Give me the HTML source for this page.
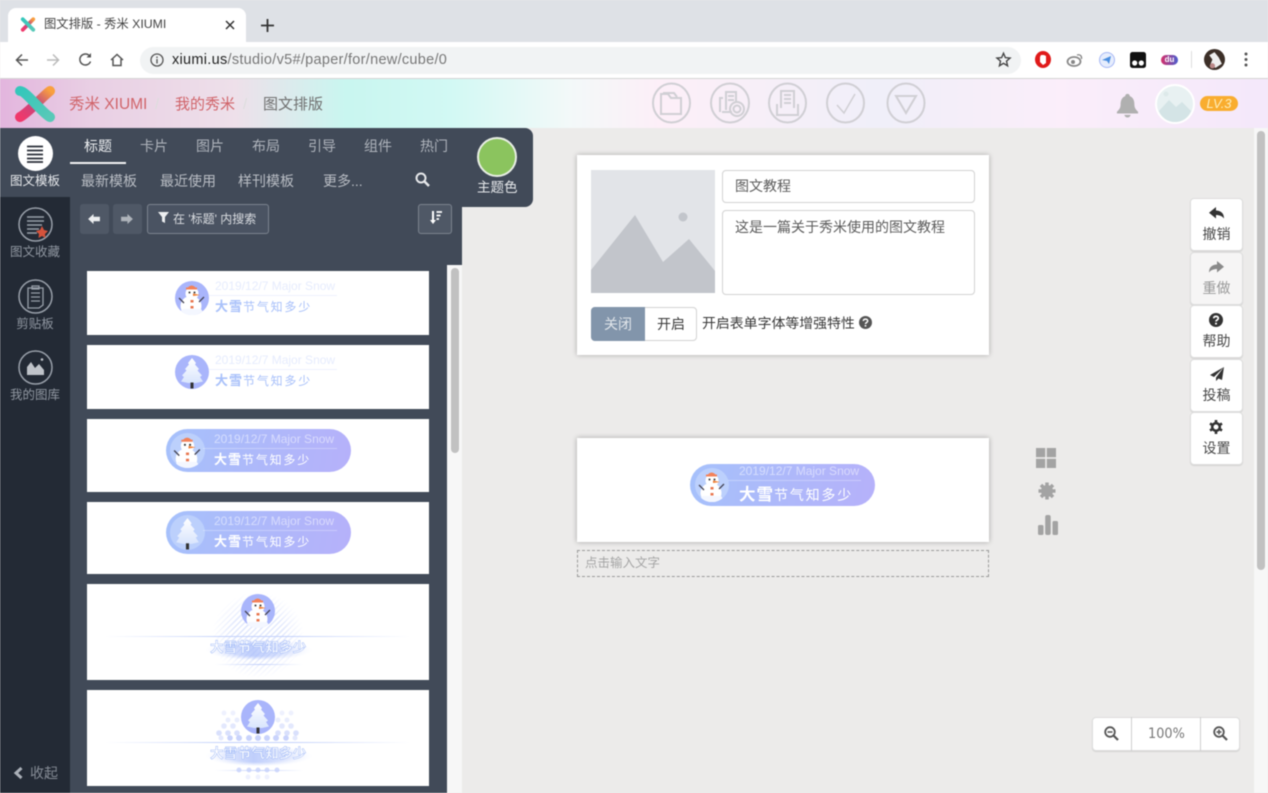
<!DOCTYPE html>
<html lang="zh"><head><meta charset="utf-8"><title>图文排版 - 秀米 XIUMI</title>
<style>
*{box-sizing:border-box}
html{background:#ecebea}
html,body{margin:0;padding:0;width:1268px;height:793px;overflow:hidden;font-family:"Liberation Sans","Noto Sans CJK SC",sans-serif}
#root{position:absolute;left:0;top:0;width:1268px;height:793px;overflow:hidden;background:#ecebea;filter:blur(.4px)}
.a{position:absolute}
.t{position:absolute;white-space:nowrap;line-height:1}
svg{position:absolute;overflow:visible}
.card{position:absolute;left:87px;width:342px;background:#fff}
.btn{position:absolute;left:1190px;width:53px;height:53px;background:#fff;border:1px solid #ddd;border-radius:4px;box-shadow:0 1px 1px rgba(0,0,0,.1)}
.btn span{position:absolute;left:0;right:0;top:27px;text-align:center;font-size:14px;line-height:16px;color:#4a4a4a}
.pill{position:absolute;width:185px;height:43px;border-radius:22px;background:linear-gradient(100deg,#a6c1fb,#b6b1fa)}
.pill .d{position:absolute;left:48px;top:3px;font-size:12px;line-height:14px;color:rgba(255,255,255,.5);white-space:nowrap}
.pill .l{position:absolute;left:37px;right:14px;top:19px;height:1px;background:rgba(255,255,255,.3)}
.pill .m{position:absolute;left:48px;top:22px;font-size:12px;line-height:17px;color:#fff;white-space:nowrap;letter-spacing:1.800px}
.pill b{font-size:13px;font-weight:700;letter-spacing:1px}
.side{position:absolute;left:0;width:70px;text-align:center;font-size:12.500px;line-height:14px;color:#8f96a0}
.tab{position:absolute;top:138px;font-size:14px;line-height:16px;color:#aeb3bb}
.sub{position:absolute;top:173px;font-size:14px;line-height:17px;color:#b9bdc4;white-space:nowrap}
</style></head><body><div id="root">
<svg width="0" height="0" style="position:absolute"><defs>
<linearGradient id="tg" x1="0" y1="0" x2="0" y2="1"><stop offset="0" stop-color="#fff"/><stop offset="1" stop-color="#d9e5fd"/></linearGradient>
<clipPath id="cc"><circle cx="17" cy="17" r="17"/></clipPath>
<symbol id="snow" viewBox="0 0 34 34">
<circle cx="17" cy="17" r="17" fill="currentColor"/>
<g clip-path="url(#cc)"><circle cx="17" cy="12.500" r="6.500" fill="#fff"/><ellipse cx="16" cy="25" rx="10.500" ry="10" fill="#fff"/><path d="M0 34L8 28H26L30 34Z" fill="#f4f7ff"/></g>
<path d="M12 7.500Q16.500 1.500 21.500 7.500Z" fill="#f3825a"/><rect x="11" y="6.500" width="11" height="2" fill="#f3825a"/>
<path d="M18 12.500L25 14L18 15Z" fill="#ef7b30"/><circle cx="14.500" cy="11.500" r="1" fill="#333"/><circle cx="19.500" cy="11.500" r="1" fill="#333"/>
<path d="M4 17L9 22M29 16L24 21" stroke="#445" stroke-width="1.300"/>
<rect x="15.500" y="19" width="3" height="2.500" fill="#e9774f"/><rect x="15.500" y="25" width="3" height="2.500" fill="#e9774f"/>
</symbol>
<symbol id="tree" viewBox="0 0 34 34">
<circle cx="17" cy="17" r="17" fill="currentColor"/>
<path d="M17 3L21 8L20 9.500L24 14L22.500 15.500L27 20.500L25 22L28 26.500L21 28H13L6 26.500L9 22L7 20.500L11.500 15.500L10 14L14 9.500L13 8Z" fill="url(#tg)"/>
<rect x="15.500" y="27.500" width="3" height="6" fill="#333"/>
</symbol>
<linearGradient id="lg1" x1="0" y1="1" x2="1" y2="0"><stop offset="0" stop-color="#f0386b"/><stop offset=".55" stop-color="#c2477f"/><stop offset="1" stop-color="#f9a03f"/></linearGradient>
<linearGradient id="lg2" x1="0" y1="0" x2="1" y2="1"><stop offset="0" stop-color="#35c7bb"/><stop offset="1" stop-color="#58c9b8"/></linearGradient>
</defs></svg>

<!-- browser chrome -->
<div class="a" style="left:0;top:0;width:1268px;height:42px;background:#dee1e6"></div>
<div class="a" style="left:8px;top:8px;width:238px;height:34px;background:#fff;border-radius:8px 8px 0 0"></div>
<svg style="left:20px;top:17px" width="16" height="15" viewBox="0 0 40 40"><path d="M6 34L34 6" stroke="url(#lg1)" stroke-width="10" stroke-linecap="round"/><path d="M6 6L34 34" stroke="url(#lg2)" stroke-width="10" stroke-linecap="round"/></svg>
<div class="t" style="left:44px;top:18px;font-size:12.300px;color:#444">图文排版 - 秀米 XIUMI</div>
<svg style="left:225px;top:20px" width="10" height="10" viewBox="0 0 10 10"><path d="M1 1L9 9M9 1L1 9" stroke="#333" stroke-width="1.500"/></svg>
<svg style="left:261px;top:19px" width="13" height="13" viewBox="0 0 13 13"><path d="M6.500 0V13M0 6.500H13" stroke="#333" stroke-width="1.800"/></svg>
<div class="a" style="left:0;top:42px;width:1268px;height:36px;background:#fff"></div>
<div class="a" style="left:0;top:78px;width:1268px;height:1px;background:#d4d4d4"></div>
<svg style="left:15px;top:53px" width="14" height="14" viewBox="0 0 14 14"><path d="M13 7H1.500M7 1.500L1.500 7L7 12.500" fill="none" stroke="#555" stroke-width="1.500"/></svg>
<svg style="left:46px;top:53px" width="14" height="14" viewBox="0 0 14 14"><path d="M1 7H12.500M7 1.500L12.500 7L7 12.500" fill="none" stroke="#bbb" stroke-width="1.500"/></svg>
<svg style="left:78px;top:52px" width="15" height="15" viewBox="0 0 15 15"><path d="M12.500 9.500A5.500 5.500 0 1 1 12 4.500" fill="none" stroke="#555" stroke-width="1.500"/><path d="M13 1V5.500H8.500Z" fill="#555"/></svg>
<svg style="left:110px;top:53px" width="14" height="14" viewBox="0 0 14 14"><path d="M1 7L7 1.500L13 7M3 6V12.500H11V6" fill="none" stroke="#555" stroke-width="1.500"/></svg>
<div class="a" style="left:140px;top:47px;width:881px;height:27px;background:#f1f3f4;border-radius:13.500px"></div>
<svg style="left:150px;top:53px" width="14" height="14" viewBox="0 0 14 14"><circle cx="7" cy="7" r="6" fill="none" stroke="#555" stroke-width="1.300"/><path d="M7 6V10.500M7 3.500V5" stroke="#555" stroke-width="1.400"/></svg>
<div class="t" style="left:172px;top:52px;font-size:14.500px;letter-spacing:.29px;color:#777;line-height:16px"><span style="color:#222">xiumi.us</span>/studio/v5#/paper/for/new/cube/0</div>
<svg style="left:996px;top:52px" width="15" height="15" viewBox="0 0 24 24"><path d="M12 2L15 9L22.500 9.700L16.800 14.600L18.500 22L12 18L5.500 22L7.200 14.600L1.500 9.700L9 9Z" fill="none" stroke="#444" stroke-width="2.200"/></svg>
<svg style="left:1035px;top:51px" width="16" height="17" viewBox="0 0 16 17"><ellipse cx="8" cy="8.500" rx="8" ry="8.500" fill="#e01a1a"/><path d="M5 6V11L8 14L11 12V5L9 4H6Z" fill="#fff"/></svg>
<svg style="left:1067px;top:52px" width="16" height="15" viewBox="0 0 16 15"><ellipse cx="7" cy="9.500" rx="6.500" ry="4.500" fill="none" stroke="#8a8a8a" stroke-width="1.800"/><circle cx="6" cy="10" r="2" fill="#888"/><path d="M10 3C13 2 15 4 14.500 7" fill="none" stroke="#888" stroke-width="1.300"/></svg>
<svg style="left:1099px;top:52px" width="16" height="16" viewBox="0 0 16 16"><circle cx="8" cy="8" r="7.500" fill="#e6edfd" stroke="#a7b8f5"/><path d="M3 8L12 4L10 12L8 9Z" fill="#4a8ee0"/></svg>
<svg style="left:1130px;top:52px" width="16" height="16" viewBox="0 0 16 16"><rect width="16" height="16" rx="2.500" fill="#111"/><circle cx="4.700" cy="11" r="2.600" fill="#fff"/><circle cx="11.300" cy="11" r="2.600" fill="#fff"/></svg>
<div class="a" style="left:1161px;top:55px;width:17px;height:10px;border-radius:5px;background:linear-gradient(90deg,#d6306c,#4a5ecf);color:#fff;font-size:8px;line-height:10px;text-align:center;font-weight:700">du</div>
<div class="a" style="left:1191px;top:51px;width:1px;height:17px;background:#ddd"></div>
<svg style="left:1204px;top:49px" width="21" height="21" viewBox="0 0 20 20"><circle cx="10" cy="10" r="10" fill="#3c2f28"/><path d="M5 6L10 3L14 8L17 14L11 18L6 15L8 10Z" fill="#eee"/><circle cx="8" cy="16" r="2.500" fill="#b88"/></svg>
<svg style="left:1244px;top:52px" width="4" height="15" viewBox="0 0 4 15"><circle cx="2" cy="2" r="1.500" fill="#555"/><circle cx="2" cy="7.500" r="1.500" fill="#555"/><circle cx="2" cy="13" r="1.500" fill="#555"/></svg>

<!-- header -->
<div class="a" style="left:0;top:79px;width:1268px;height:49px;background:linear-gradient(90deg,#e3b5de 0,#e9cfe4 90px,#eee0ea 235px,#c9f6f0 345px,#d2f9f4 450px,#f3f9f9 570px,#fdeff8 660px,#f0eff9 880px,#fbeefa 1060px,#f4e8fa 1268px)"></div>
<svg style="left:14px;top:85px" width="42" height="38" viewBox="0 0 42 38"><path d="M6 32C14 28 28 12 36 6" stroke="url(#lg1)" stroke-width="10" stroke-linecap="round" fill="none"/><path d="M6 6C12 6 28 28 36 32" stroke="url(#lg2)" stroke-width="10" stroke-linecap="round" fill="none"/></svg>
<div class="t" style="left:69px;top:96px;font-size:15.500px;line-height:18px;color:#d0646a">秀米 XIUMI</div>
<div class="t" style="left:155px;top:96px;font-size:15px;line-height:18px;color:#ddd">/</div>
<div class="t" style="left:175px;top:96px;font-size:15px;line-height:18px;color:#d0646a">我的秀米</div>
<div class="t" style="left:243px;top:96px;font-size:15px;line-height:18px;color:#ddd">/</div>
<div class="t" style="left:263px;top:96px;font-size:15px;line-height:18px;color:#6f6f6f">图文排版</div>
<svg style="left:650px;top:82px" width="280" height="42" viewBox="0 0 280 42" fill="none" stroke="#d0cfd4" stroke-width="2">
<ellipse cx="21.500" cy="21" rx="18.500" ry="19.500"/><ellipse cx="80" cy="21" rx="19" ry="19.500"/><ellipse cx="137.500" cy="21" rx="18.500" ry="19.500"/><ellipse cx="195.500" cy="21" rx="18.500" ry="19.500"/><ellipse cx="256" cy="21" rx="18.500" ry="19.500"/>
<path d="M11 14V32H31V16H21L18 12H11Z"/><path d="M14 12V11H24L27 15"/>
<path d="M70 30V16H73M76 28V10H86V20M72 30H82M78 14H84M78 18H84"/><circle cx="87" cy="27" r="7"/><circle cx="87" cy="27" r="3.500"/>
<path d="M127 22V33H148V22M131 26V9H144V26M134 13H141M134 17H141M134 21H141"/>
<path d="M187 23L194 31L205 12" stroke-width="1.500"/>
<path d="M246 14H266L256 31Z"/>
</svg>
<svg style="left:1116px;top:93px" width="23" height="25" viewBox="0 0 25 28" preserveAspectRatio="none"><path d="M12.500 1C14 1 15 2 15 3.500C19 5 20 9 20 13C20 17 22 19 24 21V23H1V21C3 19 5 17 5 13C5 9 6 5 10 3.500C10 2 11 1 12.500 1Z" fill="#b0b0b0"/><path d="M9 24.500H16C15.500 26.500 14 27.500 12.500 27.500C11 27.500 9.500 26.500 9 24.500Z" fill="#b0b0b0"/></svg>
<svg style="left:1155px;top:84px" width="40" height="40" viewBox="0 0 40 40"><circle cx="20" cy="20" r="19" fill="#e8f1f2" stroke="#fff" stroke-width="2"/><path d="M4 27L14 16L21 23L27 18L36 27C32 36 25 38 20 38C13 38 7 34 4 27Z" fill="#d4e4e6"/><circle cx="11" cy="10" r="2.500" fill="#dde9ea"/></svg>
<div class="a" style="left:1200px;top:96px;width:38px;height:15px;border-radius:7.500px;background:#f9ad2f;color:#fdeebc;font-size:13px;line-height:15px;font-style:italic;text-align:center">LV.3</div>

<!-- left panels -->
<div class="a" style="left:0;top:197px;width:70px;height:596px;background:#232a35"></div>
<div class="a" style="left:70px;top:200px;width:392px;height:593px;background:#414a58"></div>
<div class="a" style="left:0;top:128px;width:533px;height:79px;background:#414a58;border-radius:0 8px 8px 0"></div>
<div class="a" style="left:0;top:197px;width:70px;height:10px;background:#232a35"></div>
<div class="a" style="left:447px;top:265px;width:15px;height:528px;background:#f7f7f7"></div>
<div class="a" style="left:451px;top:268px;width:8px;height:185px;background:#c1c1c1;border-radius:4px"></div>

<div class="a" style="left:18px;top:136px;width:35px;height:35px;border-radius:50%;background:#fff"></div>
<svg style="left:26px;top:145px" width="18" height="18" viewBox="0 0 18 18"><path d="M1 1.500H17M1 5.500H17M1 9.500H17M1 13.500H17M1 17H17" stroke="#2a2f38" stroke-width="1.800"/></svg>
<div class="side" style="top:174px;color:#e6e8eb">图文模板</div>
<svg style="left:18px;top:207px" width="35" height="35" viewBox="0 0 35 35"><circle cx="17.500" cy="17.500" r="16.500" fill="none" stroke="#99a0aa" stroke-width="1.500"/><path d="M9 10H26M9 14H26M9 18H24M9 22H21M9 26H19" stroke="#99a0aa" stroke-width="1.600"/><path d="M24 19L26 23L30 24L27 27L27.500 31L24 29L20.500 31L21 27L18 24L22 23Z" fill="#d5533c"/></svg>
<div class="side" style="top:245px">图文收藏</div>
<svg style="left:18px;top:279px" width="35" height="35" viewBox="0 0 35 35"><circle cx="17.500" cy="17.500" r="16.500" fill="none" stroke="#99a0aa" stroke-width="1.500"/><path d="M10 9H25V26L21 29H10Z M14 7H21V10H14Z M13 14H22M13 18H22M13 22H22" fill="none" stroke="#99a0aa" stroke-width="1.300"/></svg>
<div class="side" style="top:317px">剪贴板</div>
<svg style="left:18px;top:350px" width="35" height="35" viewBox="0 0 35 35"><circle cx="17.500" cy="17.500" r="16.500" fill="none" stroke="#99a0aa" stroke-width="1.500"/><path d="M9 25V17L13 12L17 18L21 14L26 20V25Z" fill="#bfc3c9"/><circle cx="24" cy="9.500" r="1.300" fill="#bfc3c9"/></svg>
<div class="side" style="top:388px">我的图库</div>
<svg style="left:13px;top:767px" width="11" height="12" viewBox="0 0 11 12"><path d="M8.500 1L3 6L8.500 11" fill="none" stroke="#aab0b8" stroke-width="3"/></svg>
<div class="t" style="left:30px;top:765px;font-size:14px;line-height:16px;color:#858b95">收起</div>

<div class="tab" style="left:84px;color:#eceef0">标题</div>
<div class="a" style="left:70px;top:162px;width:56px;height:2px;background:#f3f4f5"></div>
<div class="tab" style="left:140px">卡片</div>
<div class="tab" style="left:196px">图片</div>
<div class="tab" style="left:252px">布局</div>
<div class="tab" style="left:308px">引导</div>
<div class="tab" style="left:364px">组件</div>
<div class="tab" style="left:420px">热门</div>
<div class="sub" style="left:81px">最新模板</div>
<div class="sub" style="left:160px">最近使用</div>
<div class="sub" style="left:238px">样刊模板</div>
<div class="sub" style="left:323px">更多...</div>
<svg style="left:415px;top:172px" width="15" height="15" viewBox="0 0 15 15"><circle cx="6" cy="6" r="4.500" fill="none" stroke="#e6e8eb" stroke-width="2"/><path d="M9.500 9.500L14 14" stroke="#e6e8eb" stroke-width="2.500"/></svg>
<div class="a" style="left:477px;top:137px;width:40px;height:40px;border-radius:50%;background:#8bc45e;border:2px solid #e8eee4"></div>
<div class="t" style="left:477px;top:180px;font-size:13.500px;line-height:15px;color:#e6e8eb">主题色</div>

<div class="a" style="left:80px;top:204px;width:29px;height:30px;background:#4f5866;border-radius:3px"></div>
<svg style="left:88px;top:214px" width="12" height="10" viewBox="0 0 13 11"><path d="M6 0V3H13V8H6V11L0 5.500Z" fill="#eceef0"/></svg>
<div class="a" style="left:113px;top:204px;width:29px;height:30px;background:#4f5866;border-radius:3px"></div>
<svg style="left:121px;top:214px" width="12" height="10" viewBox="0 0 13 11"><path d="M7 0V3H0V8H7V11L13 5.500Z" fill="#aeb3ba"/></svg>
<div class="a" style="left:147px;top:204px;width:122px;height:30px;background:#4a5362;border:1px solid #7b838e;border-radius:3px"></div>
<svg style="left:158px;top:212px" width="11" height="11" viewBox="0 0 11 11"><path d="M0 0H11L7 5V11L4 9.500V5Z" fill="#eceef0"/></svg>
<div class="t" style="left:173px;top:212px;font-size:12px;line-height:14px;color:#dadde1">在 '标题' 内搜索</div>
<div class="a" style="left:418px;top:204px;width:34px;height:30px;background:#4f5866;border:1px solid #7b838e;border-radius:3px"></div>
<svg style="left:430px;top:211px" width="12" height="14" viewBox="0 0 12 14"><path d="M3 0V10" stroke="#fff" stroke-width="2"/><path d="M0 9H6L3 13Z" fill="#fff"/><path d="M6.500 1H12M6.500 4.500H10.500M6.500 8H9" stroke="#fff" stroke-width="1.800"/></svg>

<!-- template cards -->
<div class="card" style="top:271px;height:64px"></div>
<svg style="left:175px;top:281px;color:#a9b5fb" width="34" height="34"><use href="#snow"/></svg>
<div class="t" style="left:215px;top:279px;font-size:12px;line-height:14px;color:#e6ecfd">2019/12/7 Major Snow</div>
<div class="a" style="left:209px;top:295px;width:128px;height:1px;background:#eef2fe"></div>
<div class="t" style="left:215px;top:298px;font-size:12px;line-height:17px;color:#a9c1fa;letter-spacing:1.800px"><b style="font-size:13px;letter-spacing:1px">大雪</b>节气知多少</div>

<div class="card" style="top:345px;height:64px"></div>
<svg style="left:175px;top:355px;color:#a9b5fb" width="34" height="34"><use href="#tree"/></svg>
<div class="t" style="left:215px;top:353px;font-size:12px;line-height:14px;color:#e6ecfd">2019/12/7 Major Snow</div>
<div class="a" style="left:209px;top:369px;width:128px;height:1px;background:#eef2fe"></div>
<div class="t" style="left:215px;top:372px;font-size:12px;line-height:17px;color:#a9c1fa;letter-spacing:1.800px"><b style="font-size:13px;letter-spacing:1px">大雪</b>节气知多少</div>

<div class="card" style="top:419px;height:73px"></div>
<div class="pill" style="left:166px;top:429px"><svg style="left:4px;top:4px;color:#bcd0fc" width="35" height="35"><use href="#snow"/></svg><div class="d">2019/12/7 Major Snow</div><div class="l"></div><div class="m"><b>大雪</b>节气知多少</div></div>

<div class="card" style="top:502px;height:72px"></div>
<div class="pill" style="left:166px;top:511px"><svg style="left:4px;top:4px;color:#bcd0fc" width="35" height="35"><use href="#tree"/></svg><div class="d">2019/12/7 Major Snow</div><div class="l"></div><div class="m"><b>大雪</b>节气知多少</div></div>

<div class="card" style="top:584px;height:96px"></div>
<div class="a" style="left:212px;top:592px;width:92px;height:86px;background:repeating-linear-gradient(135deg,#e3e9fd 0 1.500px,#fff 1.500px 4px);-webkit-mask-image:radial-gradient(closest-side,#000 55%,transparent);mask-image:radial-gradient(closest-side,#000 55%,transparent)"></div>
<div class="a" style="left:205px;top:640px;width:108px;height:20px;background:linear-gradient(90deg,rgba(170,190,250,.1),rgba(170,190,250,.75) 45%,rgba(170,190,250,.1));-webkit-mask-image:radial-gradient(closest-side,#000 60%,transparent);mask-image:radial-gradient(closest-side,#000 60%,transparent)"></div>
<div class="a" style="left:105px;top:636px;width:305px;height:1px;background:linear-gradient(90deg,transparent,#c3d1fb 40%,#c3d1fb 60%,transparent)"></div>
<div class="a" style="left:215px;top:664px;width:88px;height:1px;background:linear-gradient(90deg,transparent,#c3d1fb,transparent)"></div>
<svg style="left:241px;top:594px;color:#a9b5fb" width="34" height="34"><use href="#snow"/></svg>
<div class="t" style="left:210px;top:640px;font-size:13.500px;line-height:16px;font-weight:700;color:#fff;-webkit-text-stroke:.5px #a4bcf8;letter-spacing:.3px">大雪节气知多少</div>

<div class="card" style="top:690px;height:96px"></div>
<svg style="left:215px;top:698px" width="86" height="84" viewBox="0 0 86 84"><g fill="#c9d3fc">
<g opacity=".3"><circle cx="9" cy="15" r="2.500"/><circle cx="18" cy="15" r="2.500"/><circle cx="67" cy="15" r="2.500"/><circle cx="76" cy="15" r="2.500"/></g>
<g opacity=".4"><circle cx="13" cy="22" r="2.500"/><circle cx="22" cy="22" r="2.500"/><circle cx="63" cy="22" r="2.500"/><circle cx="72" cy="22" r="2.500"/></g>
<g opacity=".5"><circle cx="9" cy="28" r="2.800"/><circle cx="18" cy="28" r="2.800"/><circle cx="67" cy="28" r="2.800"/><circle cx="76" cy="28" r="2.800"/></g>
<g opacity=".7"><circle cx="4" cy="35" r="2.800"/><circle cx="13" cy="35" r="2.800"/><circle cx="22" cy="35" r="2.800"/><circle cx="63" cy="35" r="2.800"/><circle cx="72" cy="35" r="2.800"/><circle cx="81" cy="35" r="2.800"/></g>
<circle cx="6" cy="40" r="2.500" opacity=".5"/><circle cx="15" cy="40" r="2.800"/><circle cx="24" cy="40" r="3"/><circle cx="34" cy="40" r="3"/><circle cx="43" cy="40" r="3"/><circle cx="52" cy="40" r="3"/><circle cx="61" cy="40" r="3"/><circle cx="71" cy="40" r="2.800"/><circle cx="80" cy="40" r="2.500" opacity=".5"/>
<g opacity=".8"><circle cx="24" cy="72" r="2.500"/><circle cx="34" cy="72" r="2.500"/><circle cx="43" cy="72" r="2.500"/><circle cx="52" cy="72" r="2.500"/><circle cx="62" cy="72" r="2.500"/></g>
<g opacity=".3"><circle cx="33" cy="79" r="2.500"/><circle cx="43" cy="79" r="2.500"/><circle cx="52" cy="79" r="2.500"/></g>
</g></svg>
<div class="a" style="left:205px;top:746px;width:108px;height:20px;background:linear-gradient(90deg,rgba(170,190,250,.1),rgba(170,190,250,.75) 45%,rgba(170,190,250,.1));-webkit-mask-image:radial-gradient(closest-side,#000 60%,transparent);mask-image:radial-gradient(closest-side,#000 60%,transparent)"></div>
<div class="a" style="left:105px;top:742px;width:305px;height:1px;background:linear-gradient(90deg,transparent,#c3d1fb 40%,#c3d1fb 60%,transparent)"></div>
<div class="a" style="left:215px;top:770px;width:88px;height:1px;background:linear-gradient(90deg,transparent,#c3d1fb,transparent)"></div>
<svg style="left:241px;top:700px;color:#a9b5fb" width="34" height="34"><use href="#tree"/></svg>
<div class="t" style="left:210px;top:746px;font-size:13.500px;line-height:16px;font-weight:700;color:#fff;-webkit-text-stroke:.5px #a4bcf8;letter-spacing:.3px">大雪节气知多少</div>

<!-- main scrollbar -->
<div class="a" style="left:1254px;top:128px;width:14px;height:665px;background:#f7f7f7"></div>
<div class="a" style="left:1257px;top:131px;width:8px;height:439px;background:#c1c1c1;border-radius:4px"></div>

<!-- form card -->
<div class="a" style="left:577px;top:155px;width:412px;height:200px;background:#fff;box-shadow:0 0 5px rgba(0,0,0,.28)"></div>
<div class="a" style="left:591px;top:170px;width:124px;height:123px;background:#e2e4e8"></div>
<svg style="left:591px;top:170px" width="124" height="123" viewBox="0 0 124 123"><path d="M0 100L44 45L72 92L98 69L124 101V123H0Z" fill="#c2c5cb"/><circle cx="92" cy="47" r="4.500" fill="#c2c5cb"/></svg>
<div class="a" style="left:722px;top:170px;width:253px;height:33px;border:1px solid #d2d2d2;border-radius:4px;background:#fff"></div>
<div class="t" style="left:735px;top:178px;font-size:14px;line-height:17px;color:#5c5c5c">图文教程</div>
<div class="a" style="left:722px;top:210px;width:253px;height:85px;border:1px solid #d2d2d2;border-radius:4px;background:#fff"></div>
<div class="t" style="left:735px;top:219px;font-size:14px;line-height:17px;color:#5c5c5c">这是一篇关于秀米使用的图文教程</div>
<div class="a" style="left:591px;top:307px;width:106px;height:34px;border:1px solid #d2d2d2;border-radius:4px;background:#fff"></div>
<div class="a" style="left:591px;top:307px;width:54px;height:34px;border-radius:4px 0 0 4px;background:#8295ab;color:#e0e5ea;font-size:14px;line-height:34px;text-align:center">关闭</div>
<div class="t" style="left:657px;top:316px;font-size:14px;line-height:17px;color:#3a3a3a">开启</div>
<div class="t" style="left:702px;top:315px;font-size:13.900px;line-height:17px;color:#3a3a3a">开启表单字体等增强特性</div>
<svg style="left:859px;top:316px" width="13" height="13" viewBox="0 0 13 13"><circle cx="6.500" cy="6.500" r="6.500" fill="#555"/><path d="M4.300 5C4.500 2.500 8.700 2.500 8.700 5C8.700 6.500 6.500 6.500 6.500 8" fill="none" stroke="#fff" stroke-width="1.500"/><rect x="5.700" y="9" width="1.600" height="1.600" fill="#fff"/></svg>

<!-- content card -->
<div class="a" style="left:577px;top:438px;width:412px;height:104px;background:#fff;box-shadow:0 0 5px rgba(0,0,0,.3)"></div>
<div class="pill" style="left:690px;top:464px;height:42px"><svg style="left:5px;top:4px;color:#bcd0fc" width="34" height="34"><use href="#snow"/></svg><div class="d" style="left:49px;top:0">2019/12/7 Major Snow</div><div class="l" style="left:38px;top:16px"></div><div class="m" style="left:49px;top:20px;font-size:14px;line-height:22px;letter-spacing:1.800px"><b style="font-size:16.500px">大雪</b>节气知多少</div></div>
<div class="a" style="left:577px;top:550px;width:412px;height:27px;border:1px dashed #9a9a9a"></div>
<div class="t" style="left:585px;top:555px;font-size:12.500px;line-height:16px;color:#a5a5a5">点击输入文字</div>

<svg style="left:1036px;top:448px" width="20" height="20" viewBox="0 0 20 20" fill="#a3a3a3"><rect width="9.200" height="9.200"/><rect x="10.800" width="9.200" height="9.200"/><rect y="10.800" width="9.200" height="9.200"/><rect x="10.800" y="10.800" width="9.200" height="9.200"/></svg>
<svg style="left:1038px;top:482px" width="18" height="18" viewBox="0 0 18 18"><path d="M9 .5V17.500M.5 9H17.500M3 3L15 15M15 3L3 15" stroke="#a3a3a3" stroke-width="3.500"/><circle cx="9" cy="9" r="6" fill="#a3a3a3"/></svg>
<svg style="left:1038px;top:515px" width="20" height="20" viewBox="0 0 20 20" fill="#a3a3a3"><rect y="10" width="5.500" height="10" rx="1.500"/><rect x="7.200" width="5.500" height="20" rx="2"/><rect x="14.500" y="6" width="5.500" height="14" rx="1.500"/></svg>

<!-- right buttons -->
<div class="btn" style="top:198px"><span>撤销</span></div>
<svg style="left:1209px;top:207px" width="15" height="12" viewBox="0 0 15 12"><path d="M7 0V3.500C11.500 3.500 15 6 15 11.500C13 9 10.500 8 7 8V11.500L0 5.700Z" fill="#333"/></svg>
<div class="btn" style="top:252px;background:#f6f5f5"><span style="color:#999">重做</span></div>
<svg style="left:1209px;top:261px" width="15" height="12" viewBox="0 0 15 12"><path d="M8 0V3.500C3.500 3.500 0 6 0 11.500C2 9 4.500 8 8 8V11.500L15 5.700Z" fill="#8a8a8a"/></svg>
<div class="btn" style="top:305px"><span>帮助</span></div>
<svg style="left:1209px;top:313px" width="14" height="14" viewBox="0 0 14 14"><circle cx="7" cy="7" r="7" fill="#333"/><path d="M4.700 5.300C5 2.700 9.300 2.700 9.300 5.300C9.300 6.900 7 6.900 7 8.500" fill="none" stroke="#fff" stroke-width="1.700"/><rect x="6.100" y="9.700" width="1.800" height="1.800" fill="#fff"/></svg>
<div class="btn" style="top:359px"><span>投稿</span></div>
<svg style="left:1209px;top:367px" width="15" height="14" viewBox="0 0 15 14"><path d="M15 0L1 8L5 10L15 0ZM15 0L7 10.500V14L9.500 11.500L13 13Z" fill="#333"/></svg>
<div class="btn" style="top:412px"><span>设置</span></div>
<svg style="left:1209px;top:420px" width="14" height="14" viewBox="0 0 14 14"><circle cx="7" cy="7" r="3.800" fill="none" stroke="#333" stroke-width="2.600"/><path d="M7 0V3M7 11V14M1 3.500L3.500 5M10.500 9L13 10.500M13 3.500L10.500 5M3.500 9L1 10.500" stroke="#333" stroke-width="2.600"/></svg>

<!-- zoom control -->
<div class="a" style="left:1092px;top:717px;width:148px;height:34px;background:#fff;border:1px solid #ddd;border-radius:4px;box-shadow:0 1px 1px rgba(0,0,0,.1)"></div>
<div class="a" style="left:1131px;top:717px;width:1px;height:34px;background:#cfcfcf"></div>
<div class="a" style="left:1200px;top:717px;width:1px;height:34px;background:#cfcfcf"></div>
<svg style="left:1104px;top:726px" width="15" height="15" viewBox="0 0 15 15"><circle cx="6" cy="6" r="4.800" fill="none" stroke="#555" stroke-width="1.800"/><path d="M3.500 6H8.500" stroke="#555" stroke-width="1.500"/><path d="M9.500 9.500L14 14" stroke="#555" stroke-width="2.200"/></svg>
<div class="t" style="left:1148px;top:726px;font-size:14px;line-height:16px;color:#777;font-family:'DejaVu Sans',sans-serif;transform:scaleX(.92);transform-origin:left">100%</div>
<svg style="left:1213px;top:726px" width="15" height="15" viewBox="0 0 15 15"><circle cx="6" cy="6" r="4.800" fill="none" stroke="#555" stroke-width="1.800"/><path d="M3.500 6H8.500M6 3.500V8.500" stroke="#555" stroke-width="1.500"/><path d="M9.500 9.500L14 14" stroke="#555" stroke-width="2.200"/></svg>
</div></body></html>
